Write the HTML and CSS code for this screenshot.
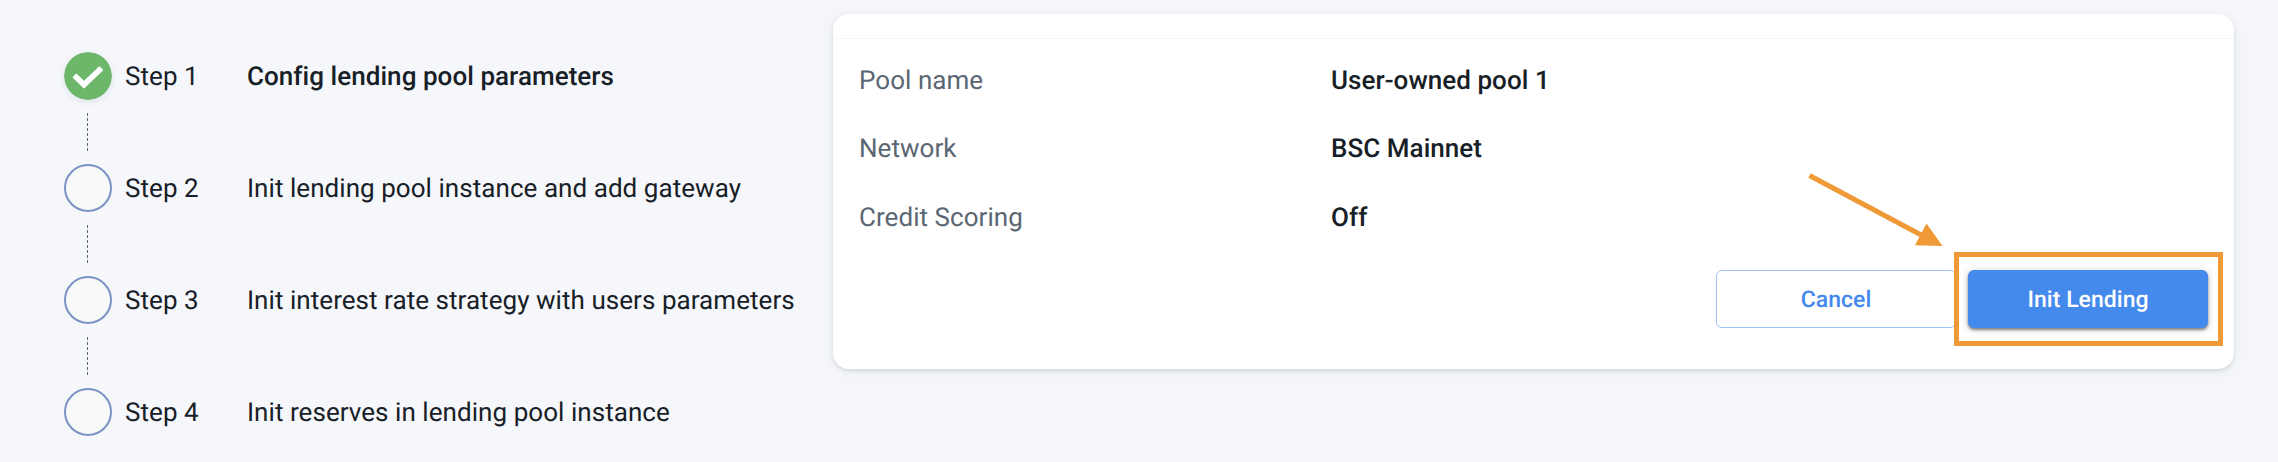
FILE: index.html
```html
<!DOCTYPE html>
<html lang="en">
<head>
<meta charset="utf-8">
<title>Init lending pool</title>
<link rel="stylesheet" href="styles.css">
</head>
<body>
<main class="page">
  <ol class="steps">
    <li class="step">
      <svg class="marker marker-done" viewBox="0 0 48 48"><circle cx="24" cy="24" r="24" fill="#6db76b"/><path d="M12.300 22.800L9.700 25.400L20 35.400L38 18L35.400 15.400L20 30.200Z" fill="#fff" stroke="#fff" stroke-width="2" stroke-linejoin="round"/></svg>
      <span class="step-label">Step 1</span><span class="step-title active">Config lending pool parameters</span>
    </li>
    <li class="connector"></li>
    <li class="step"><span class="marker open"></span><span class="step-label">Step 2</span><span class="step-title">Init lending pool instance and add gateway</span></li>
    <li class="connector"></li>
    <li class="step"><span class="marker open"></span><span class="step-label">Step 3</span><span class="step-title">Init interest rate strategy with users parameters</span></li>
    <li class="connector"></li>
    <li class="step"><span class="marker open"></span><span class="step-label">Step 4</span><span class="step-title">Init reserves in lending pool instance</span></li>
  </ol>
  <section class="card">
    <div class="card-head"></div>
    <dl class="details">
      <dt>Pool name</dt><dd>User-owned pool 1</dd>
      <dt>Network</dt><dd>BSC Mainnet</dd>
      <dt>Credit Scoring</dt><dd>Off</dd>
    </dl>
    <div class="actions">
      <button class="btn btn-outline">Cancel</button>
      <button class="btn btn-primary">Init Lending</button>
      <div class="highlight"></div>
      <svg class="arrow" viewBox="0 0 140 80"><path d="M9.500 5.500L123 66" stroke="#f09a37" stroke-width="5" fill="none"/><path d="M126.500 53.500L142.500 76L115 75.300Z" fill="#f09a37"/></svg>
    </div>
  </section>
</main>
</body>
</html>
```

FILE: styles.css
```css
* { box-sizing: border-box; }
body {
  margin: 0;
  background: #f5f7fb;
  color: #172026;
  font-family: Roboto, "Liberation Sans", sans-serif;
  font-size: 26px;
  line-height: 30px;
  letter-spacing: 0.05px;
  text-rendering: geometricPrecision;
}
.page {
  display: flex;
  align-items: flex-start;
  height: 462px;
  padding-left: 64px;
  overflow: hidden;
}
.steps {
  width: 769px;
  flex: none;
  margin: 0;
  padding: 52px 0 0;
  list-style: none;
}
.step { display: flex; align-items: center; height: 48px; white-space: nowrap; }
.marker { width: 48px; height: 48px; flex: none; margin-right: 13px; border-radius: 50%; }
.marker-done { box-shadow: 0 2px 6px rgba(40, 60, 90, 0.1); }
.open { border: 2px solid #7b92c2; background: #f8f9f9; }
.step-label,
.step-title { padding-top: 2px; }
.step-label { width: 122px; flex: none; }
.active { font-weight: 500; }
.connector {
  width: 1px;
  height: 38px;
  margin: 13px 0 13px 23px;
  background: repeating-linear-gradient(#5c6570 0 3px, transparent 3px 5px);
}
.card {
  flex: none;
  width: 1401px;
  height: 355px;
  margin-top: 14px;
  border-radius: 16px;
  background: #fff;
  box-shadow: 0 2px 4px rgba(30, 35, 45, 0.12), 0 2px 20px rgba(40, 50, 80, 0.05);
}
.card-head { height: 25px; border-bottom: 1px solid #f6f6f7; }
.details {
  display: grid;
  grid-template-columns: 472px 1fr;
  row-gap: 38.300px;
  margin: 0;
  padding: 27px 26px 0;
}
.details dt { color: #5b6673; }
.details dd { margin: 0; font-weight: 500; }
.actions {
  position: relative;
  display: flex;
  justify-content: flex-end;
  gap: 12px;
  margin-top: 37.400px;
  padding-right: 26px;
}
.btn {
  width: 240px;
  height: 58px;
  padding: 0;
  border: 0;
  border-radius: 6px;
  font: 500 23px/60px Roboto, "Liberation Sans", sans-serif;
  letter-spacing: 0.03px;
  text-rendering: geometricPrecision;
}
.btn-outline { border: 1px solid #a0c3f7; line-height: 58px; background: #fff; color: #448aec; }
.btn-primary {
  background: #448aec;
  color: #fff;
  box-shadow: 0 2px 3px rgba(0, 0, 0, 0.45), 0 1px 9px rgba(0, 0, 0, 0.16);
}
.highlight {
  position: absolute;
  top: -18px;
  right: 11px;
  width: 269px;
  height: 94px;
  border: 5px solid #f09a37;
}
.arrow {
  position: absolute;
  top: -100px;
  right: 294px;
  width: 140px;
  height: 80px;
  overflow: visible;
}
```
